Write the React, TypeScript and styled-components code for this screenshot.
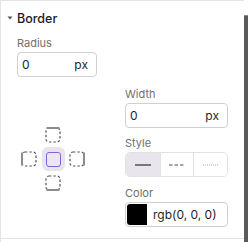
import React from "react";
import styled, { createGlobalStyle } from "styled-components";

const GlobalStyle = createGlobalStyle`
  html, body { margin: 0; padding: 0; background: #ffffff; }
  body { font-family: Inter, "Noto Sans", sans-serif; -webkit-font-smoothing: antialiased; }
  * { box-sizing: border-box; }
`;

const Page = styled.div`
  display: flex;
  width: 248px;
  height: 242px;
  overflow: hidden;
`;

const Panel = styled.div`
  width: 244px;
  height: 242px;
  border-left: 1px solid #e4e4e4;
  display: flex;
  flex-direction: column;
`;

const ScrollTrack = styled.div`
  width: 4px;
  display: flex;
  flex-direction: column;
  padding-top: 15px;
`;

const ScrollThumb = styled.div`
  flex: 1;
  background: #5a5a5a;
  border-top: 1px solid #8a8a8a;
`;

const Section = styled.section`
  height: 239px;
  border-top: 1px solid #e4e4e4;
  border-bottom: 1px solid #e4e4e4;
  padding: 9px 16px 0 16px;
  display: flex;
  flex-direction: column;
`;

const Header = styled.div`
  display: flex;
  align-items: center;
  gap: 4px;
  height: 16px;
  margin-left: -10px;
  font-size: 12.5px;
  font-weight: 500;
  color: #1c1c1c;
`;

const Field = styled.div<{ $top?: number }>`
  display: flex;
  flex-direction: column;
  gap: 2px;
  margin-top: ${(p) => p.$top ?? 0}px;
`;

const Label = styled.div`
  font-size: 11px;
  line-height: 14px;
  color: #707070;
`;

const UnitInput = styled.div<{ $width: number }>`
  width: ${(p) => p.$width}px;
  height: 25px;
  border: 1px solid #d0d0d0;
  border-radius: 4px;
  display: flex;
  align-items: center;
  justify-content: space-between;
  padding: 0 8px 0 4px;
  font-size: 12px;
  color: #1f1f1f;
`;

const Row = styled.div`
  display: flex;
  justify-content: space-between;
  align-items: flex-start;
  margin-top: 10px;
`;

const PosGrid = styled.div`
  display: grid;
  grid-template-columns: repeat(3, 24px);
  grid-template-rows: repeat(3, 24px);
  place-items: center;
  margin-top: 36px;
`;

const PosCell = styled.div<{ $col: number; $row: number }>`
  grid-column: ${(p) => p.$col};
  grid-row: ${(p) => p.$row};
  display: flex;
  align-items: center;
  justify-content: center;
  width: 16px;
  height: 16px;
`;

const CenterCell = styled.div`
  grid-column: 2;
  grid-row: 2;
  width: 23px;
  height: 24px;
  border-radius: 6px;
  background: #e7e4ec;
  display: flex;
  align-items: center;
  justify-content: center;
`;

const CenterSquare = styled.div`
  width: 15px;
  height: 15px;
  border: 1.5px solid #8c5fd4;
  border-radius: 3px;
  background: #ebe6f3;
`;

const RightCol = styled.div`
  width: 103px;
  display: flex;
  flex-direction: column;
  gap: 8px;
`;

const SegGroup = styled.div`
  display: grid;
  grid-template-columns: 1fr 1fr 1fr;
  height: 25px;
  border: 1px solid #e2e2e2;
  border-radius: 5px;
  overflow: hidden;
`;

const Seg = styled.button<{ $active?: boolean }>`
  border: none;
  padding: 0;
  margin: 0;
  background: ${(p) => (p.$active ? "#e8e6ec" : "#ffffff")};
  display: flex;
  align-items: center;
  justify-content: center;
  & + & { border-left: 1px solid #e2e2e2; }
`;

const ColorInput = styled.div`
  height: 25px;
  border: 1px solid #d0d0d0;
  border-radius: 4px;
  padding: 1px;
  display: flex;
  align-items: center;
  gap: 6px;
  font-size: 12px;
  color: #1f1f1f;
`;

const Swatch = styled.div<{ $color: string }>`
  width: 20px;
  align-self: stretch;
  background: ${(p) => p.$color};
  border-radius: 3px 0 0 3px;
`;

type Side = "top" | "left" | "right" | "bottom";

const SideBox = ({ side }: { side: Side }) => {
  const lines: Record<Side, [number, number, number, number]> = {
    top: [1.5, 1, 14.5, 1],
    bottom: [1.5, 15, 14.5, 15],
    left: [1, 1.5, 1, 14.5],
    right: [15, 1.5, 15, 14.5],
  };
  const [x1, y1, x2, y2] = lines[side];
  return (
    <svg width="16" height="16" viewBox="0 0 16 16">
      <rect x="1" y="1" width="14" height="14" rx="3" fill="none" stroke="#555" strokeWidth="1.2" strokeDasharray="2.4 2" />
      <line x1={x1} y1={y1} x2={x2} y2={y2} stroke="#8c8c8c" strokeWidth="2" />
    </svg>
  );
};

const LineIcon = ({ dash, color, width }: { dash?: string; color: string; width: number }) => (
  <svg width="16" height="4" viewBox="0 0 16 4">
    <line x1="0" y1="2" x2="16" y2="2" stroke={color} strokeWidth={width} strokeDasharray={dash} />
  </svg>
);

export default function App() {
  return (
    <Page>
      <GlobalStyle />
      <Panel>
        <Section>
          <Header>
            <svg width="6" height="4" viewBox="0 0 6 4">
              <path d="M0.5 0.5 L5.5 0.5 L3 3.5 Z" fill="#555" />
            </svg>
            <span>Border</span>
          </Header>
          <Field $top={10}>
            <Label>Radius</Label>
            <UnitInput $width={80}>
              <span>0</span>
              <span>px</span>
            </UnitInput>
          </Field>
          <Row>
            <PosGrid>
              <PosCell $col={2} $row={1}><SideBox side="top" /></PosCell>
              <PosCell $col={1} $row={2}><SideBox side="left" /></PosCell>
              <CenterCell><CenterSquare /></CenterCell>
              <PosCell $col={3} $row={2}><SideBox side="right" /></PosCell>
              <PosCell $col={2} $row={3}><SideBox side="bottom" /></PosCell>
            </PosGrid>
            <RightCol>
              <Field>
                <Label>Width</Label>
                <UnitInput $width={103}>
                  <span>0</span>
                  <span>px</span>
                </UnitInput>
              </Field>
              <Field>
                <Label>Style</Label>
                <SegGroup>
                  <Seg $active><LineIcon color="#777" width={2} /></Seg>
                  <Seg><LineIcon color="#8a8a8a" width={1.5} dash="3.5 2" /></Seg>
                  <Seg><LineIcon color="#aaa" width={1} dash="1 1" /></Seg>
                </SegGroup>
              </Field>
              <Field $top={1}>
                <Label>Color</Label>
                <ColorInput>
                  <Swatch $color="#000000" />
                  <span>rgb(0, 0, 0)</span>
                </ColorInput>
              </Field>
            </RightCol>
          </Row>
        </Section>
      </Panel>
      <ScrollTrack>
        <ScrollThumb />
      </ScrollTrack>
    </Page>
  );
}
